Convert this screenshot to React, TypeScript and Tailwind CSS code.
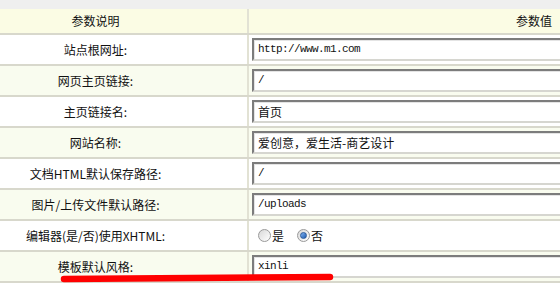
const ROWS: { label: string; value?: string; alt: boolean }[] = [
  { label: '站点根网址:', value: 'http://www.m1.com', alt: false },
  { label: '网页主页链接:', value: '/', alt: true },
  { label: '主页链接名:', value: '首页', alt: false },
  { label: '网站名称:', value: '爱创意，爱生活-商艺设计', alt: true },
  { label: '文档HTML默认保存路径:', value: '/', alt: false },
  { label: '图片/上传文件默认路径:', value: '/uploads', alt: true },
  { label: '编辑器(是/否)使用XHTML:', alt: false },
  { label: '模板默认风格:', value: 'xinli', alt: true },
];

function Radio({ checked }: { checked: boolean }) {
  return (
    <span className="flex h-[13px] w-[13px] items-center justify-center rounded-full border border-[#9a9a9a] bg-gradient-to-br from-[#d8d8d8] to-[#ffffff]">
      {checked ? (
        <span className="h-[7px] w-[7px] rounded-full bg-gradient-to-br from-[#7fb2f0] to-[#1d5bb0] border border-[#2a5a9a]" />
      ) : null}
    </span>
  );
}

function ValueInput({ value }: { value: string }) {
  const isCjk = /[\u4e00-\u9fff]/.test(value);
  return (
    <div className="flex h-[23px] w-[620px] items-center border-2 border-t-[#7c7c7c] border-l-[#7c7c7c] border-b-[#d6d6d0] border-r-[#d6d6d0] bg-white pl-[4px] shadow-[inset_1px_1px_0_#e4e4e4]">
      {isCjk ? (
        <span className="text-[12px] text-[#111]">{value}</span>
      ) : (
        <span className="font-['Liberation_Mono',monospace] text-[11px] tracking-[-0.6px] text-[#111]">{value}</span>
      )}
    </div>
  );
}

export default function App() {
  return (
    <div className="relative h-[284px] w-[560px] overflow-hidden bg-white font-['Noto_Sans_CJK_SC','Noto_Sans',sans-serif] text-[12px] text-[#111]">
      <div className="h-[9px] bg-[#efefef]" />
      <div className="flex h-[26px] w-[820px] border-b-2 border-[#d8d8cc] bg-[#fbfce4]">
        <div className="flex w-[249px] shrink-0 items-center justify-center border-r-2 border-[#e2e2d4] pr-[56px]">参数说明</div>
        <div className="flex w-[570px] shrink-0 items-center justify-center">参数值</div>
      </div>
      {ROWS.map((row) => (
        <div
          key={row.label}
          className={`flex h-[31px] w-[820px] border-b-2 border-[#d8d8cc] ${row.alt ? 'bg-[#f9fcef]' : 'bg-white'}`}
        >
          <div className="flex w-[249px] shrink-0 items-center justify-center border-r-2 border-[#e2e2d4] pr-[56px]">
            {row.label}
          </div>
          <div className="flex shrink-0 items-center pl-[3px]">
            {row.value !== undefined ? (
              <ValueInput value={row.value} />
            ) : (
              <div className="flex items-center pl-[6px]">
                <Radio checked={false} />
                <span className="ml-[1px]">是</span>
                <span className="ml-[13px]">
                  <Radio checked />
                </span>
                <span className="ml-[1px]">否</span>
              </div>
            )}
          </div>
        </div>
      ))}
      <svg className="pointer-events-none absolute left-0 top-0" width="560" height="284" viewBox="0 0 560 284">
        <path d="M64 279 Q200 278 330 277" stroke="#ff0000" strokeWidth="6.5" strokeLinecap="round" fill="none" />
      </svg>
    </div>
  );
}
